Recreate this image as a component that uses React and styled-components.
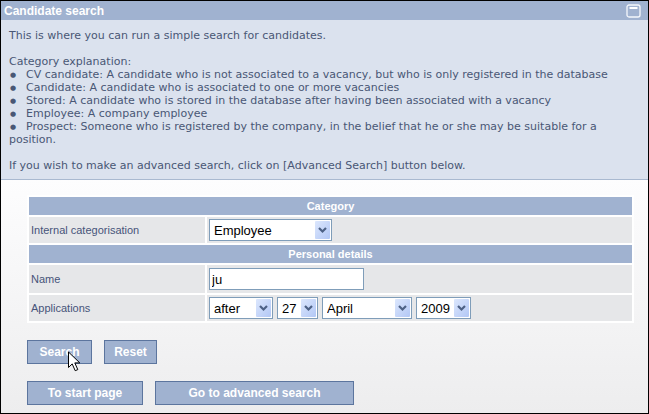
import { useState } from "react";
import styled, { createGlobalStyle } from "styled-components";

const GlobalStyle = createGlobalStyle`
	* {
		box-sizing: border-box;
	}

	html {
		height: 100%;
	}

	body {
		margin: 0;
		min-height: 100%;
		display: grid;
		font-family: "Liberation Sans", Arial, sans-serif;
	}

	#root {
		display: grid;
	}
`;

const Panel = styled.main`
	display: flex;
	flex-direction: column;
	border: 1px solid #000;
`;

const TitleBar = styled.header`
	display: flex;
	align-items: center;
	justify-content: space-between;
	height: 19px;
	padding: 0 7px 0 3px;
	background: #a0b2d0;
`;

const Title = styled.h1`
	margin: 0;
	padding-top: 2px;
	color: #fff;
	font-size: 12px;
	font-weight: bold;
	line-height: 17px;
`;

const CollapseButton = styled.button`
	display: flex;
	padding: 0;
	border: 0;
	background: none;
`;

const Description = styled.section`
	padding: 9px 8px 7px;
	border-bottom: 1px solid #a9b9d0;
	background: #dbe2ee;
	color: #495775;
	font-family: Verdana, "DejaVu Sans", sans-serif;
	font-size: 11px;
	line-height: 13px;

	p {
		margin: 0;
	}

	p + p,
	ul + p {
		margin-top: 13px;
	}

	ul {
		margin: 0;
		padding: 0;
		list-style: none;
	}
`;

const Bullet = styled.span`
	display: inline-block;
	width: 17px;
	padding-left: 1px;
	font-size: 7px;
	line-height: 7px;
	vertical-align: 1px;
`;

const Form = styled.form`
	flex: 1;
	padding: 15px 14px 8px 26px;
	background: linear-gradient(#fdfdfe, #ededee);
`;

const Fields = styled.table`
	width: 100%;
	border-spacing: 2px;
	background: #fff;
	table-layout: fixed;
`;

const LabelColumn = styled.col`
	width: 176px;
`;

const GroupHeading = styled.th`
	height: 18px;
	padding: 0;
	background: #a0b2d0;
	color: #fff;
	font-size: 11px;
	line-height: 18px;
`;

const LabelCell = styled.th`
	padding: 0 2px;
	background: #e6e7e9;
	color: #46547a;
	font-size: 11px;
	font-weight: normal;
	text-align: left;
`;

const FieldCell = styled.td`
	height: ${({ $tall }) => ($tall ? 28 : 26)}px;
	padding: 0 2px;
	background: #e6e7e9;
`;

const Controls = styled.div`
	display: flex;
	align-items: center;
	gap: 4px;
`;

const TextInput = styled.input`
	width: 155px;
	height: 22px;
	padding: 0 2px;
	border: 1px solid #7f9db9;
	background: #fff;
	color: #000;
	font: 13px "Liberation Sans", Arial, sans-serif;
	outline: none;
`;

const SelectBox = styled.span`
	display: inline-grid;
	width: ${({ $width }) => $width}px;

	select,
	svg {
		grid-area: 1 / 1;
	}

	select {
		width: 100%;
		height: 22px;
		padding: 0 0 0 4px;
		border: 1px solid #7f9db9;
		border-radius: 0;
		background: #fff;
		color: #000;
		font: 13px "Liberation Sans", Arial, sans-serif;
		appearance: none;
	}

	svg {
		place-self: center end;
		margin-right: 2px;
		pointer-events: none;
	}
`;

const ButtonRow = styled.div`
	display: flex;
	gap: 12px;
	margin-top: 17px;
`;

const Button = styled.button`
	position: relative;
	width: ${({ $width }) => $width}px;
	height: 24px;
	padding: 0;
	border: 1px solid #5c759e;
	background: #a0b2d0;
	color: #fff;
	font: bold 12px "Liberation Sans", Arial, sans-serif;
`;

const Pointer = styled.svg`
	position: absolute;
	left: 40px;
	top: 10px;
	pointer-events: none;
`;

const categories = [
	"CV candidate: A candidate who is not associated to a vacancy, but who is only registered in the database",
	"Candidate: A candidate who is associated to one or more vacancies",
	"Stored: A candidate who is stored in the database after having been associated with a vacancy",
	"Employee: A company employee",
	"Prospect: Someone who is registered by the company, in the belief that he or she may be suitable for a position.",
];

const Select = ({ id, label, options, width }) => (
	<SelectBox $width={width}>
		<select id={id} aria-label={label}>
			{options.map((option) => (
				<option key={option}>{option}</option>
			))}
		</select>
		<svg width="15" height="18" viewBox="0 0 15 18" aria-hidden="true">
			<defs>
				<linearGradient id={`${id}-face`} x1="0" y1="0" x2="1" y2="1">
					<stop offset="0" stopColor="#dce7fd" />
					<stop offset="1" stopColor="#b2c7f5" />
				</linearGradient>
			</defs>
			<rect width="15" height="18" rx="1" fill={`url(#${id}-face)`} />
			<path d="M4 7l3.5 3.5L11 7" fill="none" stroke="#4d6185" strokeWidth="2.2" />
		</svg>
	</SelectBox>
);

const App = () => {
	const [name, setName] = useState("ju");

	return (
		<>
			<GlobalStyle />
			<Panel>
				<TitleBar>
					<Title>Candidate search</Title>
					<CollapseButton type="button" aria-label="Collapse">
						<svg width="15" height="14" viewBox="0 0 15 14" fill="none">
							<rect x="1" y="1" width="13" height="12" rx="2" stroke="#f4f7fc" strokeWidth="1.3" />
							<path d="M3.5 4h8" stroke="#fff" strokeWidth="2" />
						</svg>
					</CollapseButton>
				</TitleBar>
				<Description>
					<p>This is where you can run a simple search for candidates.</p>
					<p>Category explanation:</p>
					<ul>
						{categories.map((text) => (
							<li key={text}>
								<Bullet>●</Bullet>
								{text}
							</li>
						))}
					</ul>
					<p>If you wish to make an advanced search, click on [Advanced Search] button below.</p>
				</Description>
				<Form onSubmit={(e) => e.preventDefault()}>
					<Fields>
						<colgroup>
							<LabelColumn />
							<col />
						</colgroup>
						<tbody>
							<tr>
								<GroupHeading colSpan={2}>Category</GroupHeading>
							</tr>
							<tr>
								<LabelCell>
									<label htmlFor="category">Internal categorisation</label>
								</LabelCell>
								<FieldCell>
									<Controls>
										<Select id="category" options={["Employee"]} width={123} />
									</Controls>
								</FieldCell>
							</tr>
							<tr>
								<GroupHeading colSpan={2}>Personal details</GroupHeading>
							</tr>
							<tr>
								<LabelCell>
									<label htmlFor="name">Name</label>
								</LabelCell>
								<FieldCell $tall>
									<Controls>
										<TextInput id="name" value={name} onChange={(e) => setName(e.target.value)} />
									</Controls>
								</FieldCell>
							</tr>
							<tr>
								<LabelCell>
									<label htmlFor="period">Applications</label>
								</LabelCell>
								<FieldCell>
									<Controls>
										<Select id="period" options={["after", "before"]} width={64} />
										<Select id="day" label="Day" options={["27"]} width={41} />
										<Select id="month" label="Month" options={["April"]} width={90} />
										<Select id="year" label="Year" options={["2009"]} width={55} />
									</Controls>
								</FieldCell>
							</tr>
						</tbody>
					</Fields>
					<ButtonRow>
						<Button type="submit" $width={65}>
							Search
							<Pointer width="13" height="21" viewBox="0 0 13 21" aria-hidden="true">
								<path d="M.5 1v15.5l3.7-3.6 3 6.8 2.6-1.1-3-6.7h5z" fill="#fff" stroke="#000" />
							</Pointer>
						</Button>
						<Button type="reset" $width={53} onClick={() => setName("ju")}>
							Reset
						</Button>
					</ButtonRow>
					<ButtonRow>
						<Button type="button" $width={116}>
							To start page
						</Button>
						<Button type="button" $width={199}>
							Go to advanced search
						</Button>
					</ButtonRow>
				</Form>
			</Panel>
		</>
	);
};

export default App;
